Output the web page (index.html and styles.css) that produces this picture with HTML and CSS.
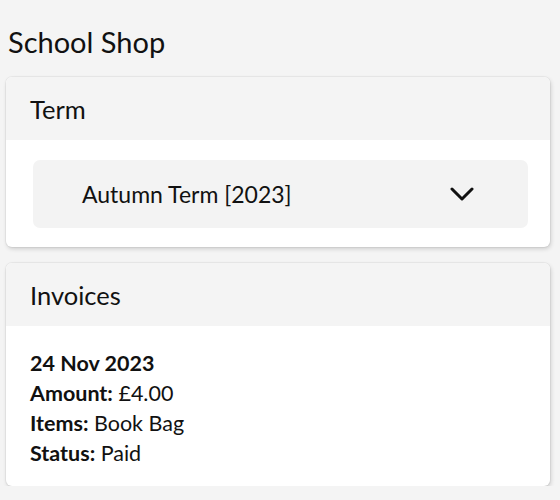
FILE: index.html
```html
<!DOCTYPE html>
<html lang="en">
<head>
<meta charset="utf-8">
<title>School Shop</title>
<link rel="stylesheet" href="styles.css">
</head>
<body>
<main class="page">
  <h1 class="title">School Shop</h1>
  <section class="card">
    <header class="card-head">Term</header>
    <div class="card-body term-body">
      <div class="select">
        <span class="select-text">Autumn Term [2023]</span>
        <svg class="chevron" width="24" height="14" viewBox="0 0 24 14"><path d="M2 2 L12 12 L22 2" fill="none" stroke="#111" stroke-width="3" stroke-linecap="round" stroke-linejoin="round"/></svg>
      </div>
    </div>
  </section>
  <section class="card">
    <header class="card-head">Invoices</header>
    <div class="card-body invoice-body">
      <div class="line"><b>24 Nov 2023</b></div>
      <div class="line"><b>Amount:</b> £4.00</div>
      <div class="line"><b>Items:</b> Book Bag</div>
      <div class="line"><b>Status:</b> Paid</div>
    </div>
  </section>
</main>
</body>
</html>
```

FILE: styles.css
```css
html, body {
  margin: 0;
  padding: 0;
  background: #f4f4f4;
  color: #111;
  font-family: Lato, "Open Sans", sans-serif;
}
.page {
  padding: 0 10px 0 6px;
  display: flex;
  flex-direction: column;
  gap: 16px;
}
.title {
  margin: 24px 0 1px 2px;
  font-size: 29px;
  font-weight: 400;
  line-height: 36px;
}
.card {
  background: #fff;
  border-radius: 6px;
  overflow: hidden;
  box-shadow: 0 0 0 1px rgba(0,0,0,0.04), 1px 2px 4px rgba(0,0,0,0.16);
}
.card-head {
  background: #f4f4f4;
  height: 63px;
  display: flex;
  align-items: center;
  padding-left: 24px;
  font-size: 25.5px;
}
.term-body {
  padding: 20px 22px 19px 27px;
}
.select {
  height: 68px;
  background: #f3f3f3;
  border-radius: 7px;
  display: flex;
  align-items: center;
  justify-content: space-between;
  padding: 0 54px 0 49px;
}
.select-text {
  font-size: 23px;
}
.chevron {
  display: block;
}
.invoice-body {
  padding: 22px 24px 18px;
  font-size: 21.5px;
  line-height: 30px;
}
.line b {
  font-weight: 700;
}
```
